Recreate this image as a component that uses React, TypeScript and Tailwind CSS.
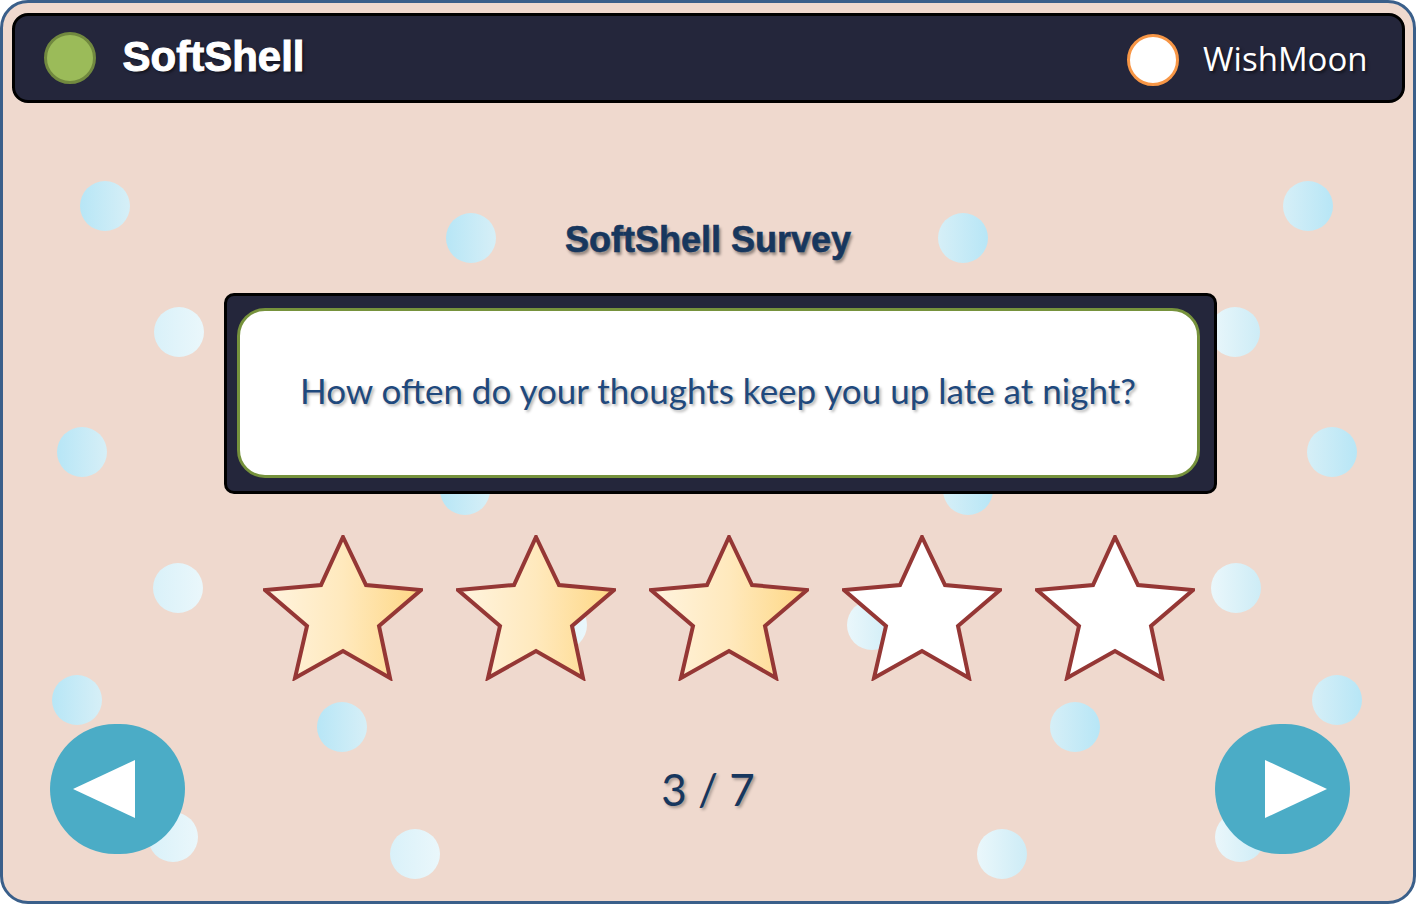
import React from 'react'

type Tone = 'a' | 'b' | 'c' | 'd'

const bubbles: { x: number; y: number; tone: Tone }[] = [
  { x: 105, y: 206, tone: 'a' },
  { x: 471, y: 238, tone: 'a' },
  { x: 963, y: 238, tone: 'b' },
  { x: 1308, y: 206, tone: 'b' },
  { x: 179, y: 332, tone: 'c' },
  { x: 1235, y: 332, tone: 'd' },
  { x: 82, y: 452, tone: 'a' },
  { x: 1332, y: 452, tone: 'b' },
  { x: 465, y: 490, tone: 'a' },
  { x: 968, y: 490, tone: 'b' },
  { x: 178, y: 588, tone: 'c' },
  { x: 1236, y: 588, tone: 'd' },
  { x: 562, y: 625, tone: 'c' },
  { x: 872, y: 625, tone: 'd' },
  { x: 77, y: 700, tone: 'a' },
  { x: 1337, y: 700, tone: 'b' },
  { x: 342, y: 727, tone: 'a' },
  { x: 1075, y: 727, tone: 'b' },
  { x: 173, y: 837, tone: 'c' },
  { x: 1240, y: 837, tone: 'd' },
  { x: 415, y: 854, tone: 'c' },
  { x: 1002, y: 854, tone: 'd' },
]

const toneClass: Record<Tone, string> = {
  a: 'bg-gradient-to-r from-[#b7e6f6] to-[#d6eff7]',
  b: 'bg-gradient-to-r from-[#d6eff7] to-[#b7e6f6]',
  c: 'bg-gradient-to-r from-[#d9f1f9] to-[#eaf7fb]',
  d: 'bg-gradient-to-r from-[#eaf7fb] to-[#cdecf6]',
}

const starPoints = '80,2 103,50 158,55 116,91 127,143 80,116 32,143 44,91 2,55 58,50'

function Star({ filled, id }: { filled: boolean; id: string }) {
  return (
    <svg width="160" height="146" viewBox="0 0 160 146" className="shrink-0">
      <defs>
        <linearGradient id={id} x1="0" y1="0" x2="1" y2="0">
          <stop offset="0" stopColor="#fff4e0" />
          <stop offset="0.5" stopColor="#ffe9bd" />
          <stop offset="1" stopColor="#fed784" />
        </linearGradient>
      </defs>
      <polygon
        points={starPoints}
        fill={filled ? `url(#${id})` : '#ffffff'}
        stroke="#953735"
        strokeWidth="4"
        strokeLinejoin="miter"
      />
    </svg>
  )
}

export default function App() {
  const rating = 3

  return (
    <div className="w-[1416px] h-[904px] bg-white">
      <div className="relative w-full h-full rounded-[28px] border-[3.5px] border-[#3a5f8a] bg-[#efd9ce] overflow-hidden">
        {/* background bubbles */}
        {bubbles.map((b, i) => (
          <div
            key={i}
            className={`absolute w-[50px] h-[50px] rounded-full ${toneClass[b.tone]}`}
            style={{ left: b.x - 25 - 3.5, top: b.y - 25 - 3.5 }}
          />
        ))}

        <div className="relative flex flex-col pt-[9.5px] px-[8.5px]">
          {/* Header */}
          <header className="h-[90px] flex items-center justify-between rounded-[16px] border-[3px] border-black bg-[#24263b] pl-[29px] pr-[34px]">
            <div className="flex items-center gap-[27px]">
              <div className="w-[52px] h-[52px] rounded-full bg-[#9bbb59] border-[3px] border-[#71893f]" />
              <span className="font-['Liberation_Sans',sans-serif] font-bold text-[42px] leading-none text-white [-webkit-text-stroke:1px_white] [text-shadow:2px_2px_3px_rgba(0,0,0,0.55)] -mt-[2px]">
                SoftShell
              </span>
            </div>
            <div className="flex items-center gap-[24px] mt-[5px]">
              <div className="w-[52px] h-[52px] rounded-full bg-white border-[3px] border-[#f79646]" />
              <span className="font-['Open_Sans',sans-serif] text-[33px] leading-none text-white [text-shadow:2px_2px_3px_rgba(0,0,0,0.5)] -mt-[4px]">
                WishMoon
              </span>
            </div>
          </header>
        </div>

        {/* Title */}
        <h1 className="relative mt-[115px] h-[44px] text-center font-['Liberation_Sans',sans-serif] font-bold text-[36px] leading-[44px] text-[#17375e] [-webkit-text-stroke:0.6px_#17375e] [text-shadow:2px_3px_3px_rgba(0,0,0,0.4)]">
          SoftShell Survey
        </h1>

        {/* Question card */}
        <div className="relative mt-[31px] ml-[220.5px] w-[993px] h-[201px] rounded-[10px] border-[3px] border-black bg-[#24263b] pt-[12px] pl-[10px]">
          <div className="w-[963px] h-[170px] rounded-[28px] border-[3.5px] border-[#76923c] bg-white flex items-center justify-center">
            <p className="font-['Lato',sans-serif] text-[35px] text-[#1f497d] [text-shadow:2px_2px_3px_rgba(0,0,0,0.3)] -mt-[4px]">
              How often do your thoughts keep you up late at night?
            </p>
          </div>
        </div>

        {/* Stars */}
        <div className="relative mt-[41px] ml-[259.5px] flex gap-[33px] h-[146px]">
          {[0, 1, 2, 3, 4].map((i) => (
            <Star key={i} id={`starfill${i}`} filled={i < rating} />
          ))}
        </div>

        {/* Bottom navigation */}
        <div className="relative mt-[43px] grid grid-cols-[1fr_auto_1fr] items-center">
          <div className="pl-[46.5px]">
            <button className="block w-[135px] h-[130px] rounded-full bg-[#4bacc6]">
              <svg width="135" height="130" viewBox="0 0 135 130">
                <polygon points="23,65 85,36 85,94" fill="#ffffff" />
              </svg>
            </button>
          </div>
          <div className="font-['Lato',sans-serif] text-[44px] leading-none text-[#17375e] [text-shadow:2px_2px_3px_rgba(0,0,0,0.3)]">
            3 / 7
          </div>
          <div className="flex justify-end pr-[63.5px]">
            <button className="block w-[135px] h-[130px] rounded-full bg-[#4bacc6]">
              <svg width="135" height="130" viewBox="0 0 135 130">
                <polygon points="50,36 50,94 112,65" fill="#ffffff" />
              </svg>
            </button>
          </div>
        </div>
      </div>
    </div>
  )
}
